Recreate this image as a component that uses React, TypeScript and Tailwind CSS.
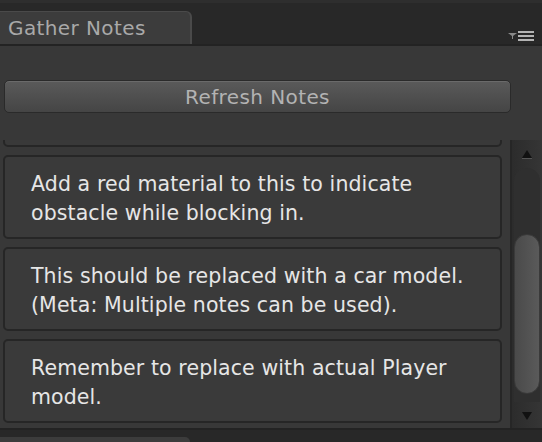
import React from "react"

const notes = [
  ["Add a red material to this to indicate", "obstacle while blocking in."],
  ["This should be replaced with a car model.", "(Meta: Multiple notes can be used)."],
  ["Remember to replace with actual Player", "model."],
]

export default function App() {
  return (
    <div className="w-[542px] h-[442px] overflow-hidden bg-[#383838] flex flex-col" style={{ fontFamily: '"DejaVu Sans", "Lucida Grande", sans-serif' }}>
      {/* tab bar */}
      <div className="h-[44px] bg-[#282828] border-t-[3px] border-[#2e2e2e] flex items-end relative shrink-0">
        <div className="w-[192px] h-[33px] bg-[#3c3c3c] rounded-tr-[6px] border-r-2 border-t border-[#4a4a4a] flex items-center pl-[8px] text-[20px] tracking-[0.4px] text-[#a9a9a9]">
          Gather Notes
        </div>
        <div className="absolute right-[8px] top-[28px] flex items-center gap-[1px]">
          <svg width="9" height="6" viewBox="0 0 9 6"><path d="M0 0h9L5 3v3H4V3z" fill="#8a8a8a" /></svg>
          <div className="flex flex-col gap-[2px]">
            <div className="w-[16px] h-[2px] bg-[#b4b4b4]" />
            <div className="w-[16px] h-[2px] bg-[#b4b4b4]" />
            <div className="w-[16px] h-[2px] bg-[#b4b4b4]" />
          </div>
        </div>
      </div>
      <div className="h-[2px] bg-[#232323] shrink-0" />
      {/* button */}
      <div className="pt-[34px] pr-[31px] pl-[4px] pb-[27px] shrink-0">
        <div className="h-[33px] rounded-[5px] border border-[#2a2a2a] bg-gradient-to-b from-[#5a5a5a] to-[#454545] shadow-[inset_0_1px_0_#6a6a6a] flex items-center justify-center text-[20px] tracking-[0.4px] text-[#b3b3b3]">
          Refresh Notes
        </div>
      </div>
      {/* scroll area */}
      <div className="flex h-[288px] shrink-0">
        <div className="flex-1 overflow-hidden">
          <div className="flex flex-col gap-[8px] pl-[3px] pr-[8px] -mt-[77px]">
            <div className="h-[84px] shrink-0 rounded-[5px] border-2 border-[#262626] bg-[#393939]" />
            {notes.map((n) => (
              <div key={n[0]} className="h-[84px] shrink-0 rounded-[5px] border-2 border-[#262626] bg-[#3a3a3a] pl-[26px] pr-[6px] pt-[4px] flex flex-col justify-center text-[20.5px] tracking-[0.1px] leading-[29px] text-[#e6e6e6] whitespace-nowrap">
                {n.map((l) => (
                  <div key={l}>{l}</div>
                ))}
              </div>
            ))}
          </div>
        </div>
        <div className="w-[32px] flex flex-col border-l-2 border-[#262626] bg-gradient-to-r from-[#2c2c2c] to-[#353535]">
          <div className="h-[28px] flex items-center justify-center shrink-0">
            <svg width="10" height="9" viewBox="0 0 10 9"><path d="M5 0L10 8H0z" fill="#111" /><path d="M0 8.5h10" stroke="#555" /></svg>
          </div>
          <div className="flex-1 mx-[2px] rounded-t-full bg-[#2f2f2f] pt-[66px]">
            <div className="h-[160px] rounded-full bg-gradient-to-r from-[#4a4a4a] to-[#5a5a5a] border border-[#3a3a3a]" />
          </div>
          <div className="h-[26px] flex items-center justify-center shrink-0">
            <svg width="10" height="9" viewBox="0 0 10 9"><path d="M0 1L10 1L5 9z" fill="#111" /></svg>
          </div>
        </div>
      </div>
      <div className="h-[14px] bg-[#282828] border-t-2 border-[#232323] shrink-0 flex items-end">
        <div className="w-[190px] h-[5px] bg-[#3c3c3c] rounded-tr-[5px]" />
      </div>
    </div>
  )
}
